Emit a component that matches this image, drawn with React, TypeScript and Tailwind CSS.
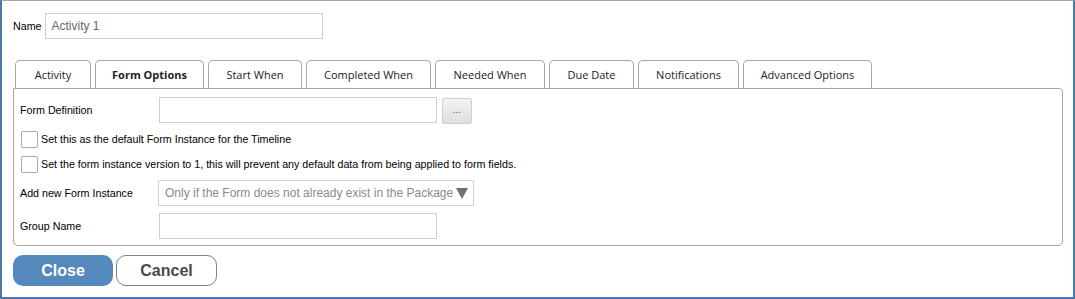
import React, { useState } from "react";

const tabs = [
  { label: "Activity", w: "w-[76px]" },
  { label: "Form Options", w: "w-[109px]" },
  { label: "Start When", w: "w-[94px]" },
  { label: "Completed When", w: "w-[125px]" },
  { label: "Needed When", w: "w-[110px]" },
  { label: "Due Date", w: "w-[85px]" },
  { label: "Notifications", w: "w-[101px]" },
  { label: "Advanced Options", w: "w-[129px]" },
];

function Checkbox() {
  return (
    <span className="block w-[17px] h-[17px] shrink-0 border border-[#a9a9a9] rounded-[2px] bg-white" />
  );
}

export default function App() {
  const [active, setActive] = useState(1);

  return (
    <div className="w-[1075px] h-[299px] bg-white border-t border-t-[#a6a6a6] border-x-2 border-b-2 border-x-[#4d79a9] border-b-[#4d79a9] pl-[11px] pr-[11px] pt-3 font-['Liberation_Sans',Arial,sans-serif] text-[10.7px] text-black">
      {/* name row */}
      <div className="flex items-center gap-[3px]">
        <span>Name</span>
        <div className="w-[278px] h-[26px] border border-[#cfcfcf] flex items-center px-[6px] text-[12px] text-[#666]">
          Activity 1
        </div>
      </div>

      {/* tabs */}
      <div className="mt-[21px] ml-[2px] flex gap-[4px] font-['Open_Sans',sans-serif] text-[11px] text-[#222]">
        {tabs.map((t, i) => (
          <button
            key={t.label}
            onClick={() => setActive(i)}
            className={`${t.w} h-[28px] pt-[2px] border border-b-0 border-[#a6a6a6] rounded-t-[5px] bg-white flex items-center justify-center ${
              i === active ? "font-bold" : ""
            }`}
          >
            {t.label}
          </button>
        ))}
      </div>

      {/* panel */}
      <div className="w-[1050px] h-[158px] border border-[#a6a6a6] rounded-b-[5px] rounded-tr-[4px] pl-[6px] pt-[8px]">
        <div className="flex items-center h-[26px]">
          <span className="w-[139px]">Form Definition</span>
          <div className="w-[278px] h-[26px] border border-[#cfcfcf]" />
          <div className="ml-[5px] mt-[2px] w-[30px] h-[26px] border border-[#cdcdcd] rounded-[2px] bg-gradient-to-b from-[#f4f4f4] to-[#dedede] flex items-center justify-center text-[10px] text-[#555] leading-none pb-[3px]">
            ...
          </div>
        </div>

        <div className="flex items-center gap-[3px] mt-[8px] ml-[1px]">
          <Checkbox />
          <span>Set this as the default Form Instance for the Timeline</span>
        </div>
        <div className="flex items-center gap-[3px] mt-[8px] ml-[1px]">
          <Checkbox />
          <span>
            Set the form instance version to 1, this will prevent any default data from being applied to form fields.
          </span>
        </div>

        <div className="flex items-center mt-[7px] h-[26px]">
          <span className="w-[138px]">Add new Form Instance</span>
          <div className="w-[316px] h-[26px] border border-[#d4d4d4] flex items-center justify-between pl-[6px] pr-[5px] text-[12px] text-[#8a8a8a]">
            <span>Only if the Form does not already exist in the Package</span>
            <svg width="12" height="11" viewBox="0 0 12 11" className="shrink-0">
              <path d="M0 0 H12 L6 11 Z" fill="#707070" />
            </svg>
          </div>
        </div>

        <div className="flex items-center mt-[7px] h-[26px]">
          <span className="w-[139px]">Group Name</span>
          <div className="w-[278px] h-[26px] border border-[#cfcfcf]" />
        </div>
      </div>

      {/* buttons */}
      <div className="flex gap-[3px] mt-[9px] text-[16px] font-bold">
        <button className="w-[100px] h-[31px] rounded-[10px] bg-[#5589bd] text-white">Close</button>
        <button className="w-[101px] h-[31px] rounded-[10px] bg-white border border-[#808080] text-[#4a4a4a]">
          Cancel
        </button>
      </div>
    </div>
  );
}
